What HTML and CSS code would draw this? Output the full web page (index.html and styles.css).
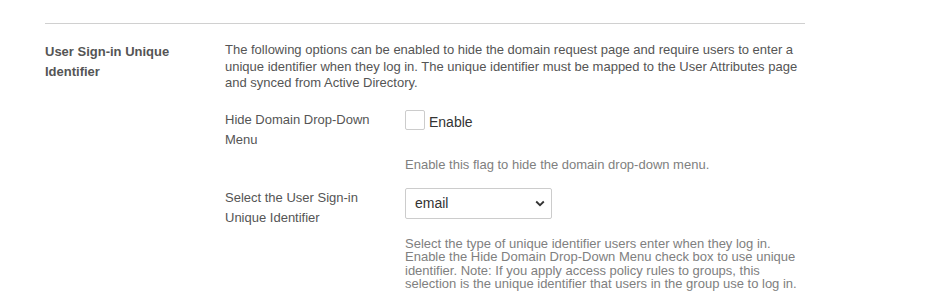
FILE: index.html
```html
<!DOCTYPE html>
<html>
<head>
<meta charset="utf-8">
<link rel="stylesheet" href="styles.css">
</head>
<body>
<div class="page">
  <div class="section">
    <div class="section-title">User Sign-in Unique Identifier</div>
    <div class="section-body">
      <p class="intro">The following options can be enabled to hide the domain request page and require users to enter a unique identifier when they log in. The unique identifier must be mapped to the User Attributes page and synced from Active Directory.</p>
      <div class="field">
        <div class="field-label">Hide Domain Drop-Down Menu</div>
        <div class="field-control">
          <label class="check"><span class="box"></span><span class="check-text">Enable</span></label>
          <div class="help help-first">Enable this flag to hide the domain drop-down menu.</div>
        </div>
      </div>
      <div class="field">
        <div class="field-label">Select the User Sign-in Unique Identifier</div>
        <div class="field-control">
          <div class="select">
            <span>email</span>
            <svg class="chev" width="10" height="7" viewBox="0 0 10 7"><path d="M1.2 1.5 L5 5.2 L8.8 1.5" fill="none" stroke="#333" stroke-width="1.8"/></svg>
          </div>
          <div class="help help-second">Select the type of unique identifier users enter when they log in. Enable the Hide Domain Drop-Down Menu check box to use unique identifier. Note: If you apply access policy rules to groups, this selection is the unique identifier that users in the group use to log in.</div>
        </div>
      </div>
    </div>
  </div>
</div>
</body>
</html>
```
FILE: styles.css
```css
html, body {
  margin: 0;
  padding: 0;
  background: #fff;
}
body {
  font-family: "Liberation Sans", Arial, sans-serif;
  font-size: 13px;
  color: #555;
}
.page {
  margin-left: 45px;
  width: 760px;
  padding-top: 23px;
}
.section {
  border-top: 1px solid #d0d0d0;
  display: flex;
  padding-top: 18px;
}
.section-title {
  width: 180px;
  flex: none;
  font-weight: bold;
  line-height: 20px;
  padding-right: 40px;
  box-sizing: border-box;
  color: #555;
}
.section-body {
  flex: 1;
}
.intro {
  margin: 0;
  line-height: 16.5px;
  color: #555;
}
.field {
  display: flex;
  margin-top: 18px;
}
.field + .field {
  margin-top: 17px;
}
.field-label {
  width: 180px;
  flex: none;
  line-height: 20px;
  padding-right: 20px;
  box-sizing: border-box;
  color: #555;
}
.field-control {
  flex: 1;
}
.check {
  display: flex;
  align-items: center;
  height: 20px;
}
.box {
  width: 18px;
  height: 18px;
  border: 1px solid #ccc;
  border-radius: 2px;
  background: #fff;
}
.check-text {
  margin-left: 4px;
  font-size: 14px;
  color: #333;
  position: relative;
  top: 2px;
}
.help {
  color: #808080;
  line-height: 13.4px;
}
.help-first {
  margin-top: 28px;
}
.help-second {
  margin-top: 18px;
  width: 395px;
}
.select {
  width: 147px;
  height: 31px;
  box-sizing: border-box;
  border: 1px solid #ccc;
  border-radius: 2px;
  display: flex;
  align-items: center;
  justify-content: space-between;
  padding: 0 6px 0 9px;
  font-size: 14px;
  color: #333;
}
.chev {
  display: block;
}
```
